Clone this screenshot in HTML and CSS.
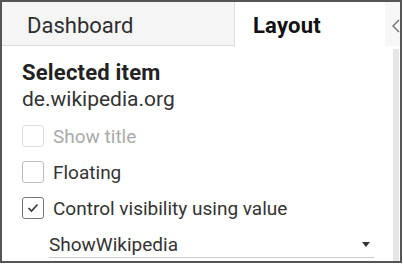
FILE: index.html
```html
<!DOCTYPE html>
<html lang="en">
<head>
  <meta charset="UTF-8" />
  <title>Layout pane</title>
  <link rel="stylesheet" href="styles.css">
</head>
<body>
<div class="pane">
  <div class="tabs">
    <div class="tab">Dashboard</div>
    <div class="tab active">Layout</div>
    <div class="collapse">
      <svg width="8" height="14" viewBox="0 0 8 14"><path d="M7 1 L1 7 L7 13" fill="none" stroke="#777" stroke-width="1.5"/></svg>
    </div>
  </div>
  <div class="body">
    <div class="content">
      <div class="heading">Selected item</div>
      <div class="item-name">de.wikipedia.org</div>
      <label class="check disabled"><span class="box"></span>Show title</label>
      <label class="check"><span class="box"></span>Floating</label>
      <label class="check on">
        <span class="box"><svg width="12" height="10" viewBox="0 0 12 10"><path d="M1.5 5 L4.5 8 L10.5 1.5" fill="none" stroke="#333" stroke-width="1.6"/></svg></span>
        Control visibility using value
      </label>
      <div class="select">
        <span>ShowWikipedia</span>
        <svg width="8" height="5" viewBox="0 0 8 5"><path d="M0 0 H8 L4 5 Z" fill="#333"/></svg>
      </div>
    </div>
    <div class="scrollbar"></div>
  </div>
</div>
</body>
</html>
```

FILE: styles.css
```css
html, body {
  margin: 0;
  background: #fff;
}
body {
  font-family: Roboto, 'Liberation Sans', sans-serif;
  color: #333;
  padding: 0 1px 2px 0;
}
.pane {
  width: 398px;
  height: 259px;
  border: 2px solid #555;
  display: flex;
  flex-direction: column;
  overflow: hidden;
}
.tabs {
  display: flex;
  height: 44px;
  flex: none;
}
.tab {
  width: 233px;
  height: 44px;
  background: #f5f5f5;
  border-right: 1px solid #ddd;
  border-bottom: 1px solid #ddd;
  font-size: 22px;
  line-height: 40px;
  padding: 4px 0 0 25px;
  box-sizing: border-box;
  color: #2e2e2e;
}
.tab.active {
  width: 150px;
  background: #fff;
  border: none;
  font-weight: bold;
  color: #111;
  padding-left: 18px;
  letter-spacing: 0.2px;
}
.collapse {
  flex: 1;
  background: #f7f7f7;
  display: flex;
  align-items: center;
  justify-content: flex-end;
  padding-top: 4px;
}
.body {
  flex: 1;
  display: flex;
}
.content {
  flex: 1;
  padding: 14px 0 0 20px;
}
.scrollbar {
  width: 6px;
  margin-right: 1px;
  background: #e6e6e6;
  margin-top: 3px;
}
.heading {
  font-size: 22px;
  font-weight: bold;
  line-height: 26px;
  color: #222;
  letter-spacing: 0.2px;
}
.item-name {
  font-size: 21px;
  line-height: 26px;
  color: #333;
}
.check {
  display: flex;
  align-items: center;
  gap: 9px;
  font-size: 19px;
  height: 22px;
  margin-top: 14px;
  color: #333;
}
.check:first-of-type {
  margin-top: 13px;
}
.box {
  width: 20px;
  height: 20px;
  border: 1px solid #bbb;
  border-radius: 3px;
  display: flex;
  align-items: center;
  justify-content: center;
  flex: none;
}
.check.disabled {
  color: #aaa;
}
.check.disabled .box {
  border-color: #ddd;
}
.check.on .box {
  border-color: #777;
}
.select {
  display: flex;
  align-items: center;
  justify-content: space-between;
  margin: 12px 0 0 27px;
  width: 325px;
  height: 27px;
  border-bottom: 1px solid #ccc;
  font-size: 19px;
  padding-right: 4px;
  box-sizing: border-box;
}
```
